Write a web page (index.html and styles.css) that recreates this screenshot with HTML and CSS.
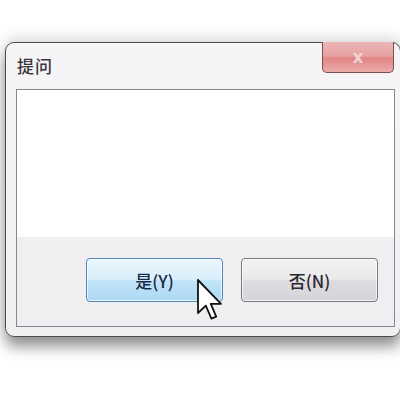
FILE: index.html
```html
<!DOCTYPE html>
<html lang="zh">
<head>
    <meta charset="UTF-8">
    <meta name="viewport" content="width=device-width, initial-scale=1.0">
    <title>提问</title>
    <link rel="stylesheet" href="styles.css">
</head>
<body>
    <div class="screen">
        <div class="dialog">
            <div class="title-bar">
                <span class="title">提问</span>
                <button type="button" class="close-button">x</button>
            </div>

            <div class="dialog-body">
                <div class="message"></div>
                <div class="button-row">
                    <button type="button" class="dlg-button primary">是(Y)</button>
                    <button type="button" class="dlg-button">否(N)</button>
                </div>
            </div>

            <!-- 鼠标指针 -->
            <svg class="cursor" width="26" height="44" viewBox="0 0 13 22">
                <path d="M0.5 0.5 L0.5 17 L4.4 13.3 L7.2 19.8 L9.6 18.8 L6.9 12.4 L12 12.4 Z"
                      fill="#fff" stroke="#111" stroke-width="0.9" stroke-linejoin="round"/>
            </svg>
        </div>
    </div>
</body>
</html>
```

FILE: styles.css
```css
* {
    margin: 0;
    padding: 0;
    box-sizing: border-box;
}

body {
    font-family: "Noto Sans CJK SC", "Noto Sans", sans-serif;
    background: #ffffff;
    width: 400px;
    height: 400px;
    overflow: hidden;
}

.screen {
    padding: 42px 0 0 5px;
}

/* 对话框外框 */
.dialog {
    position: relative;
    width: 396px;
    height: 295px;
    background: linear-gradient(#f6f4f6, #f1eff2);
    border: 1px solid #4e4a50;
    border-radius: 9px;
    box-shadow: 0 10px 14px rgba(0, 0, 0, 0.42),
                0 -6px 14px rgba(0, 0, 0, 0.12);
    padding: 0 5px 0 10px;
    display: flex;
    flex-direction: column;
}

.title-bar {
    height: 46px;
    display: flex;
    justify-content: space-between;
    align-items: flex-start;
}

.title {
    font-size: 17px;
    font-weight: 500;
    color: #38353b;
    margin: 10px 0 0 1px;
    letter-spacing: 1px;
}

.close-button {
    width: 72px;
    height: 31px;
    margin: -1px 1px 0 0;
    border: 1px solid #7a4f52;
    border-top: none;
    border-radius: 0 0 5px 5px;
    background: linear-gradient(#ecb6b6 0%, #e7a2a2 45%, #e08686 55%, #eaabab 100%);
    color: #f4d2d2;
    font-family: "DejaVu Sans", sans-serif;
    font-size: 17px;
    font-weight: bold;
    line-height: 28px;
}

/* 内容区域 */
.dialog-body {
    height: 238px;
    border: 1px solid #8a878c;
    display: flex;
    flex-direction: column;
}

.message {
    height: 147px;
    background: #ffffff;
}

.button-row {
    flex: 1;
    background: #f0eef0;
    display: flex;
    justify-content: flex-end;
    gap: 18px;
    padding: 21px 16px 0 0;
}

.dlg-button {
    width: 137px;
    height: 44px;
    border: 1px solid #7a787c;
    border-radius: 4px;
    background: linear-gradient(#f3f2f3 0%, #ebeaeb 48%, #dedcdf 52%, #d6d4d8 100%);
    color: #2a2830;
    font-family: "Noto Sans CJK SC", "Noto Sans", sans-serif;
    font-size: 17px;
    font-weight: 500;
    box-shadow: inset 0 0 0 1px rgba(255, 255, 255, 0.7);
}

.dlg-button.primary {
    border-color: #4f87b5;
    background: linear-gradient(#eaf5fc 0%, #d9effb 48%, #c1e4f8 52%, #acd9f4 100%);
    color: #1c2948;
}

.cursor {
    position: absolute;
    left: 191px;
    top: 236px;
}
```
